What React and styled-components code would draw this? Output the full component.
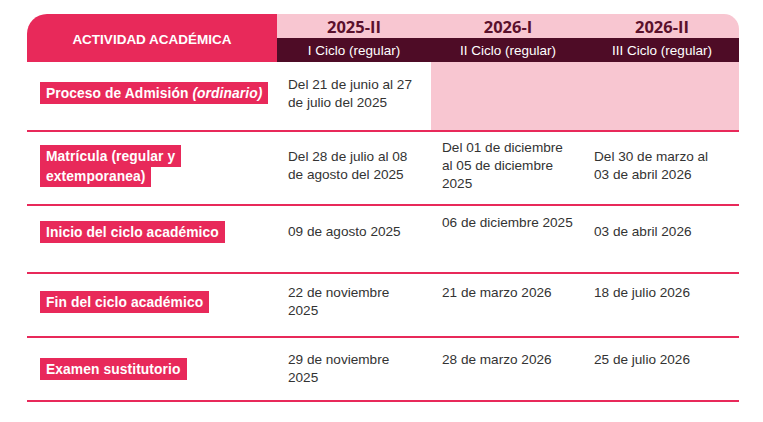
import React from 'react';
import styled, { createGlobalStyle } from 'styled-components';

const RED = '#e8295a';
const PINK = '#f8c6d1';
const MAROON = '#4e0c26';
const COLS = '250px 154px 154px 154px';

const GlobalStyle = createGlobalStyle`
    html, body {
        background: #fff;
        margin: 0;
        padding: 0;
    }
    body {
        font-family: "Liberation Sans", Arial, sans-serif;
    }
`;

const Page = styled.div`
    padding: 14px 0 0 27px;
`;

const Table = styled.div`
    width: 712px;
`;

const Header = styled.div`
    display: grid;
    grid-template-columns: ${COLS};
    grid-template-rows: 24px 24px;
`;

const TitleCell = styled.div`
    align-items: center;
    background: ${RED};
    border-top-left-radius: 20px;
    color: #fff;
    display: flex;
    font-size: 13.5px;
    font-weight: 700;
    grid-row: 1 / span 2;
    justify-content: center;
    padding-top: 3px;
`;

const YearCell = styled.div`
    align-items: center;
    background: ${PINK};
    border-top-right-radius: ${({ last }) => (last ? '15px' : '0')};
    color: #5a102c;
    display: flex;
    font-family: "Open Sans", sans-serif;
    font-size: 16.5px;
    font-weight: 700;
    justify-content: center;
    padding-top: 1px;
`;

const CycleCell = styled.div`
    align-items: center;
    background: ${MAROON};
    color: #fff;
    display: flex;
    font-size: 13.5px;
    justify-content: center;
`;

const Row = styled.div`
    border-bottom: 2px solid ${RED};
    box-sizing: border-box;
    display: grid;
    grid-template-columns: ${COLS};
    height: ${({ h }) => h}px;
`;

const LabelCell = styled.div`
    align-items: center;
    display: flex;
    padding: 0 6px ${({ shift }) => shift}px 13px;
`;

const Label = styled.div`
    font-size: 13.8px;
    font-weight: 700;
    letter-spacing: 0.1px;
    line-height: 20px;

    span {
        background: ${RED};
        box-decoration-break: clone;
        -webkit-box-decoration-break: clone;
        color: #fff;
        padding: 3.5px 6px;
    }
`;

const DateCell = styled.div`
    align-items: center;
    background: ${({ blank }) => (blank ? PINK : 'transparent')};
    color: #333;
    display: flex;
    font-size: 13.6px;
    line-height: 18px;
    padding: 0 8px ${({ shift }) => shift}px ${({ indent }) => indent}px;
    white-space: nowrap;
`;

const years = [
    { year: '2025-II', cycle: 'I Ciclo (regular)' },
    { year: '2026-I', cycle: 'II Ciclo (regular)' },
    { year: '2026-II', cycle: 'III Ciclo (regular)' }
];

const rows = [
    {
        label: (
            <>
                Proceso de Admisión <i>(ordinario)</i>
            </>
        ),
        cells: [['Del 21 de junio al 27', 'de julio del 2025'], null, null],
        h: 70,
        shift: 5
    },
    {
        label: (
            <>
                Matrícula (regular y<br />
                extemporanea)
            </>
        ),
        cells: [
            ['Del 28 de julio al 08', 'de agosto del 2025'],
            ['Del 01 de diciembre', 'al 05 de diciembre', '2025'],
            ['Del 30 de marzo al', '03 de abril 2026']
        ],
        h: 74,
        shift: 4
    },
    {
        label: 'Inicio del ciclo académico',
        cells: [['09 de agosto 2025'], ['06 de diciembre 2025', ''], ['03 de abril 2026']],
        h: 68,
        shift: 14
    },
    {
        label: 'Fin del ciclo académico',
        cells: [['22 de noviembre', '2025'], ['21 de marzo 2026', ''], ['18 de julio 2026', '']],
        h: 64,
        shift: 6
    },
    {
        label: 'Examen sustitutorio',
        cells: [['29 de noviembre', '2025'], ['28 de marzo 2026', ''], ['25 de julio 2026', '']],
        h: 64,
        shift: 0
    }
];

const indents = [11, 11, 9];

function Lines({ lines }) {
    return lines.map((line, i) => (
        <React.Fragment key={i}>
            {i > 0 && <br />}
            {line || '\u00a0'}
        </React.Fragment>
    ));
}

export default function App() {
    return (
        <Page>
            <GlobalStyle />
            <Table>
                <Header>
                    <TitleCell>ACTIVIDAD ACADÉMICA</TitleCell>
                    {years.map((y, i) => (
                        <YearCell key={y.year} last={i === years.length - 1}>
                            {y.year}
                        </YearCell>
                    ))}
                    {years.map((y) => (
                        <CycleCell key={y.cycle}>{y.cycle}</CycleCell>
                    ))}
                </Header>
                {rows.map((row, r) => (
                    <Row key={r} h={row.h}>
                        <LabelCell shift={row.shift}>
                            <Label>
                                <span>{row.label}</span>
                            </Label>
                        </LabelCell>
                        {row.cells.map((lines, c) => (
                            <DateCell key={c} blank={!lines} shift={row.shift} indent={indents[c]}>
                                {lines && (
                                    <div>
                                        <Lines lines={lines} />
                                    </div>
                                )}
                            </DateCell>
                        ))}
                    </Row>
                ))}
            </Table>
        </Page>
    );
}
